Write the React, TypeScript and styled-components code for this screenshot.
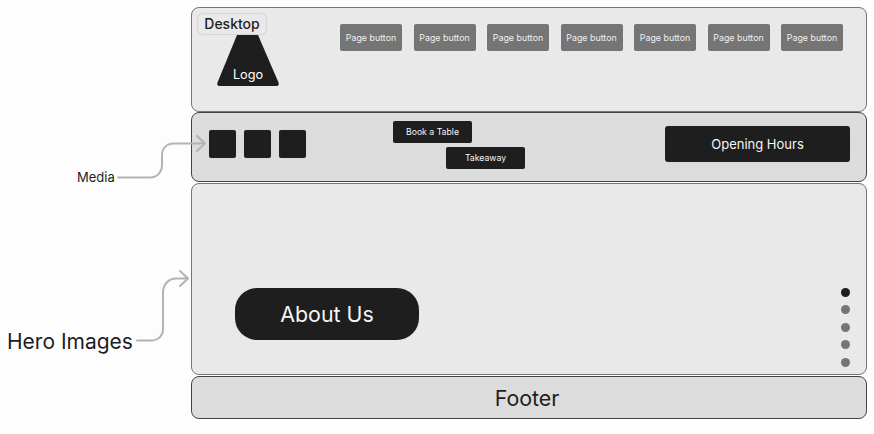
import React from 'react'
import { createGlobalStyle, styled } from 'styled-components'

const pages = Array.from({ length: 7 }, (_, i) => i)
const dots = [true, false, false, false, false]

export default function App() {
	return (
		<>
			<GlobalStyle />
			<Page>
				<Annotations width="874" height="434" viewBox="0 0 874 434" fill="none">
					<path d="M118 177.5H150C157 177.5 162 172 162 165V155C162 148 167 143.5 174 143.5H204" />
					<path d="M197 136L205 143.5L197 151" />
					<path d="M137 340.5H151C158 340.5 163 336 163 329V293C163 285 168 278.5 176 278.5H187" />
					<path d="M180 271L188 278.5L180 286" />
				</Annotations>
				<MediaLabel>Media</MediaLabel>
				<HeroLabel>Hero Images</HeroLabel>

				<Header>
					<DesktopTag>Desktop</DesktopTag>
					<Logo>
						<svg width="62" height="52" viewBox="0 0 62 52">
							<path
								d="M20 0H41L61.5 47.5Q62.5 51 59 51H3Q-.5 51 .5 47.5Z"
								fill="#1e1e1e"
							/>
						</svg>
						<LogoText>Logo</LogoText>
					</Logo>
					<PageNav>
						{pages.map((p) => (
							<PageButton key={p}>Page button</PageButton>
						))}
					</PageNav>
				</Header>

				<MediaBar>
					<Squares>
						<Square />
						<Square />
						<Square />
					</Squares>
					<Actions>
						<ActionButton>Book a Table</ActionButton>
						<ActionButton $shifted>Takeaway</ActionButton>
					</Actions>
					<HoursButton>Opening Hours</HoursButton>
				</MediaBar>

				<Hero>
					<AboutButton>About Us</AboutButton>
					<Dots>
						{dots.map((active, i) => (
							<Dot key={i} $active={active} />
						))}
					</Dots>
				</Hero>

				<Footer>Footer</Footer>
			</Page>
		</>
	)
}

const GlobalStyle = createGlobalStyle`
	html, body {
		margin: 0;
		background: #fdfdfd;
	}
	body {
		font-family: Inter, "Liberation Sans", sans-serif;
		color: #1e1e1e;
	}
`

const Page = styled.div`
	position: relative;
	box-sizing: border-box;
	width: 874px;
	height: 434px;
	padding: 7px 7px 0 191px;
	display: flex;
	flex-direction: column;
	gap: 1px;
	overflow: hidden;
`

const Annotations = styled.svg`
	position: absolute;
	left: 0;
	top: 0;
	z-index: 2;
	pointer-events: none;

	path {
		stroke: #b3b3b3;
		stroke-width: 2;
		stroke-linecap: round;
		stroke-linejoin: round;
	}
`

const MediaLabel = styled.div`
	position: absolute;
	left: 77px;
	top: 169px;
	font-size: 13px;
	line-height: 17px;
`

const HeroLabel = styled.div`
	position: absolute;
	left: 7px;
	top: 328px;
	font-size: 21px;
	line-height: 28px;
`

const Panel = styled.section`
	box-sizing: border-box;
	border: 1px solid #757575;
	border-radius: 8px;
	background: #e9e9e9;
	position: relative;
`

const Header = styled(Panel)`
	height: 105px;
	margin-bottom: -1px;
	padding: 16px 23px 0 148px;
`

const DesktopTag = styled.div`
	position: absolute;
	left: 5px;
	top: 5px;
	z-index: 1;
	box-sizing: border-box;
	width: 70px;
	height: 22px;
	padding-bottom: 1px;
	display: flex;
	align-items: center;
	justify-content: center;
	border: 1px solid #d4d4d4;
	border-radius: 6px;
	background: #e9e9e9;
	font-size: 14px;
	font-weight: 500;
`

const Logo = styled.div`
	position: absolute;
	left: 25px;
	top: 27px;
	width: 62px;
	height: 52px;
	line-height: 0;
`

const LogoText = styled.span`
	position: absolute;
	left: 0;
	right: 0;
	top: 31px;
	text-align: center;
	color: #fff;
	font-size: 12.7px;
	line-height: 17px;
`

const PageNav = styled.nav`
	display: flex;
	justify-content: space-between;
`

const PageButton = styled.button`
	width: 62px;
	height: 27px;
	padding: 0;
	border: 0;
	border-radius: 2px;
	background: #757575;
	color: #f0f0f0;
	font-family: inherit;
	font-size: 8.85px;
`

const MediaBar = styled(Panel)`
	height: 70px;
	background: #dcdcdc;
	border-color: #444;
	display: flex;
	align-items: center;
	padding: 0 16px 6px 17px;
`

const Squares = styled.div`
	display: flex;
	gap: 8px;
`

const Square = styled.div`
	width: 27px;
	height: 28px;
	border-radius: 2px;
	background: #1e1e1e;
`

const Actions = styled.div`
	margin: 2px 0 0 87px;
	display: flex;
	flex-direction: column;
	gap: 4px;
`

const ActionButton = styled.button<{ $shifted?: boolean }>`
	width: 79px;
	height: 22px;
	margin-left: ${(p) => (p.$shifted ? '53px' : '0')};
	padding: 0;
	border: 0;
	border-radius: 2px;
	background: #1e1e1e;
	color: #f5f5f5;
	font-family: inherit;
	font-size: 8.7px;
`

const HoursButton = styled.button`
	margin-left: auto;
	width: 185px;
	height: 36px;
	padding: 0;
	border: 0;
	border-radius: 3px;
	background: #1e1e1e;
	color: #f5f5f5;
	font-family: inherit;
	font-size: 13px;
`

const Hero = styled(Panel)`
	height: 192px;
	display: flex;
	justify-content: space-between;
	align-items: flex-end;
	padding: 0 16px 7px 43px;
`

const AboutButton = styled.button`
	width: 184px;
	height: 52px;
	margin-bottom: 27px;
	padding: 0;
	border: 0;
	border-radius: 22px;
	background: #1e1e1e;
	color: #f5f5f5;
	font-family: inherit;
	font-size: 21.4px;
`

const Dots = styled.div`
	display: flex;
	flex-direction: column;
	gap: 8.6px;
`

const Dot = styled.span<{ $active: boolean }>`
	width: 9px;
	height: 9px;
	border-radius: 50%;
	background: ${(p) => (p.$active ? '#1e1e1e' : '#757575')};
`

const Footer = styled(Panel)`
	height: 43px;
	padding-right: 4px;
	background: #dcdcdc;
	border-color: #444;
	display: flex;
	align-items: center;
	justify-content: center;
	font-size: 21.4px;
`
